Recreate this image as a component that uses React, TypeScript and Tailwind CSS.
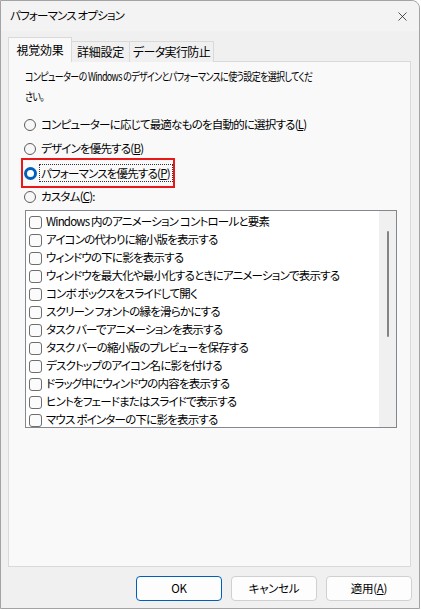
import { X } from "lucide-react";

const FONT =
  "font-['Noto_Sans_CJK_JP','Noto_Sans',sans-serif] [font-feature-settings:'palt']";

const effects = [
  "Windows 内のアニメーション コントロールと要素",
  "アイコンの代わりに縮小版を表示する",
  "ウィンドウの下に影を表示する",
  "ウィンドウを最大化や最小化するときにアニメーションで表示する",
  "コンボ ボックスをスライドして開く",
  "スクリーン フォントの縁を滑らかにする",
  "タスク バーでアニメーションを表示する",
  "タスク バーの縮小版のプレビューを保存する",
  "デスクトップのアイコン名に影を付ける",
  "ドラッグ中にウィンドウの内容を表示する",
  "ヒントをフェードまたはスライドで表示する",
  "マウス ポインターの下に影を表示する",
];

function Radio({ checked }: { checked?: boolean }) {
  if (checked) {
    return (
      <span className="w-[13px] h-[13px] rounded-full bg-[#005fb8] flex items-center justify-center shrink-0">
        <span className="w-[7px] h-[7px] rounded-full bg-white" />
      </span>
    );
  }
  return <span className="w-[12px] h-[12px] rounded-full border border-[#5c5c5c] bg-[#f7f7f7] shrink-0" />;
}

function RadioRow({ label, u, tail }: { label: string; u: string; tail?: string }) {
  return (
    <div className="h-[24px] flex items-center gap-[5px] pl-[15px] whitespace-nowrap">
      <Radio />
      <span>
        {label}(<span className="underline">{u}</span>){tail}
      </span>
    </div>
  );
}

export default function App() {
  return (
    <div
      className={`w-[421px] h-[610px] bg-white overflow-hidden text-[11.5px] tracking-[-0.8px] text-black ${FONT}`}
    >
      <div className="w-[420px] h-[609px] bg-[#f0f0f0] border border-[#a3a3a3] rounded-tr-[8px] flex flex-col">
        {/* Title bar */}
        <div className="h-[30px] bg-[#f3f3f3] rounded-tr-[8px] flex items-center justify-between pl-[9px] pr-[9px]">
          <span className="whitespace-nowrap">パフォーマンス オプション</span>
          <X size={15} strokeWidth={1.2} className="text-[#1a1a1a]" />
        </div>

        <div className="px-[7px] pt-[6px] flex flex-col">
          {/* Tabs */}
          <div className="flex items-end h-[25px] relative z-10 whitespace-nowrap tracking-[-0.3px] text-[12px]">
            <div className="h-[25px] w-[64px] bg-[#f9f9f9] border border-[#d9d9d9] border-b-0 flex items-center justify-center">
              視覚効果
            </div>
            <div className="h-[21px] w-[58px] bg-[#f0f0f0] border border-[#d9d9d9] border-l-0 border-b-0 flex items-center justify-center">
              詳細設定
            </div>
            <div className="h-[21px] w-[84px] bg-[#f0f0f0] border border-[#d9d9d9] border-l-0 border-b-0 flex items-center justify-center tracking-[-0.6px]">
              データ実行防止
            </div>
          </div>

          {/* Panel */}
          <div className="-mt-px h-[506px] w-[403px] bg-[#f9f9f9] border border-[#d9d9d9] flex flex-col">
            <p className="pl-[16px] pt-[4px] leading-[20px] whitespace-nowrap">
              <span className="inline-block origin-left scale-x-[0.78]">
                コンピューターの Windows のデザインとパフォーマンスに使う設定を選択してくだ
                <br />
                さい。
              </span>
            </p>

            <div className="mt-[7px] flex flex-col">
              <RadioRow label="コンピューターに応じて最適なものを自動的に選択する" u="L" />
              <RadioRow label="デザインを優先する" u="B" />
              <div className="h-[24px] flex items-center whitespace-nowrap">
                <div className="ml-[12px] h-[30px] w-[154px] border-2 border-[#e81818] flex items-center gap-[2px] pl-[1px]">
                  <Radio checked />
                  <span className="border border-dotted border-[#333] pl-px pr-[2px] leading-[16px]">
                    パフォーマンスを優先する(<span className="underline">P</span>)
                  </span>
                </div>
              </div>
              <RadioRow label="カスタム" u="C" tail=":" />
            </div>

            {/* List box */}
            <div className="ml-[16px] mt-[1px] w-[372px] h-[218px] border border-[#828790] bg-white flex overflow-hidden">
              <div className="flex-1 pt-[2px] flex flex-col overflow-hidden">
                {effects.map((e) => (
                  <div key={e} className="h-[18px] shrink-0 flex items-center gap-[4px] pl-[3px] whitespace-nowrap">
                    <span className="w-[13px] h-[13px] rounded-[3px] border border-[#6e6e6e] bg-[#fbfbfb] shrink-0" />
                    <span>{e}</span>
                  </div>
                ))}
              </div>
              <div className="w-[17px] bg-[#f0f0f0] flex justify-center pt-[20px]">
                <div className="w-[2px] h-[106px] bg-[#858585] rounded-full" />
              </div>
            </div>
          </div>

          {/* Buttons */}
          <div className="mt-[9px] flex justify-end gap-[9px] tracking-[-0.3px]">
            <button className="w-[86px] h-[25px] rounded-[4px] border border-[#005fb8] bg-[#fdfdfd] leading-none">
              OK
            </button>
            <button className="w-[86px] h-[25px] rounded-[4px] border border-[#d0d0d0] bg-[#fdfdfd] leading-none">
              キャンセル
            </button>
            <button className="w-[86px] h-[25px] rounded-[4px] border border-[#d0d0d0] bg-[#fdfdfd] leading-none">
              適用(<span className="underline">A</span>)
            </button>
          </div>
        </div>
      </div>
    </div>
  );
}
